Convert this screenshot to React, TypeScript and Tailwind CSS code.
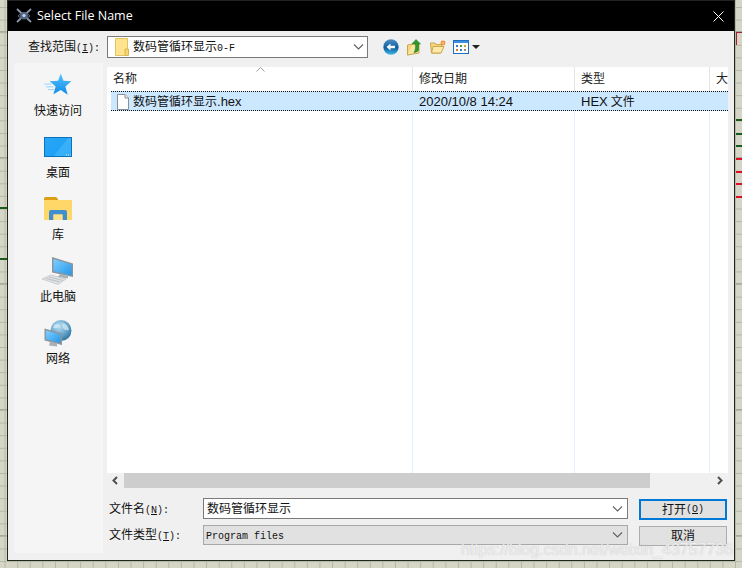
import React from "react";

const cjk = "font-['Noto_Sans','Noto_Sans_CJK_SC',sans-serif]";

function M({ children }: { children: React.ReactNode }) {
  return <span className="font-['Liberation_Mono',monospace] text-[10px]">{children}</span>;
}

function AppLogo() {
  return (
    <svg width="16" height="16" viewBox="0 0 16 16">
      <path d="M1 1 L15 14 M15 1 L1 14" stroke="#8b98a8" strokeWidth="1.8" />
      <ellipse cx="8" cy="7.5" rx="4" ry="3.5" fill="#4f6286" />
      <circle cx="8" cy="7.5" r="1.6" fill="#cfd8e6" />
      <path d="M2 8 Q8 1 14 8 Q8 14 2 8" fill="none" stroke="#5f6e80" />
    </svg>
  );
}

function FolderSmall() {
  return (
    <svg width="14" height="18" viewBox="0 0 14 18">
      <path d="M0.5 0.5 H12.5 V17.5 H0.5 Z" fill="#ffe38e" stroke="#e6c25f" />
      <path d="M10 11 H13.5 V17.5 H10 Z" fill="#f7d56e" stroke="#dcb550" />
    </svg>
  );
}

function FileIcon() {
  return (
    <svg width="14" height="16" viewBox="0 0 14 16">
      <path d="M1.5 0.5 H9 L12.5 4 V15.5 H1.5 Z" fill="#fff" stroke="#8a8f96" />
      <path d="M9 0.5 V4 H12.5" fill="#eee" stroke="#8a8f96" />
    </svg>
  );
}

function BackIcon() {
  return (
    <svg width="16" height="16" viewBox="0 0 16 16">
      <defs>
        <linearGradient id="bk" x1="0" y1="0" x2="0" y2="1">
          <stop offset="0" stopColor="#4d8fc4" />
          <stop offset="0.55" stopColor="#0f5f9e" />
          <stop offset="1" stopColor="#3fb7e8" />
        </linearGradient>
      </defs>
      <circle cx="8" cy="8" r="7.7" fill="url(#bk)" />
      <path d="M3.5 8 L7.5 4.5 V6.7 H12 V9.3 H7.5 V11.5 Z" fill="#f4f8fc" />
    </svg>
  );
}

function UpIcon() {
  return (
    <svg width="15" height="17" viewBox="0 0 15 17">
      <path d="M0.5 6 L6 5 V14 L0.5 16 Z" fill="#f6d77e" stroke="#c9a64c" />
      <path d="M6 5 H12 V14 L0.5 16" fill="#fbe6a2" stroke="#c9a64c" />
      <path d="M9 0.5 L13.5 5 H11.5 V11 Q11 13 7 13.5 Q9 11 8.5 5 H5 Z" fill="#2e9a2e" stroke="#1b6e1b" strokeWidth="0.5" />
    </svg>
  );
}

function NewFolderIcon() {
  return (
    <svg width="16" height="14" viewBox="0 0 16 14">
      <path d="M0.5 3 H5 L6 4.5 H12 V6 L10.5 13 H1.5 Z" fill="#f6d77e" stroke="#c9a64c" />
      <path d="M3 6.5 H14 L11 13 H1.5 Z" fill="#fdeaa8" stroke="#c9a64c" />
      <circle cx="13" cy="3" r="2.4" fill="#ee7a2a" />
      <path d="M13 0 V6 M10 3 H16" stroke="#ffd9a0" strokeWidth="0.7" />
    </svg>
  );
}

function ViewIcon() {
  return (
    <svg width="16" height="14" viewBox="0 0 16 14">
      <rect x="0.5" y="0.5" width="15" height="13" fill="#fff" stroke="#1f6fc4" />
      <rect x="1" y="1" width="14" height="2" fill="#3d8ede" />
      <rect x="3" y="5" width="2" height="2" fill="#3c78c8" />
      <rect x="7" y="5" width="2" height="2" fill="#49a04a" />
      <rect x="11" y="5" width="2" height="2" fill="#e0a030" />
      <rect x="3" y="9" width="2" height="2" fill="#d87830" />
      <rect x="7" y="9" width="2" height="2" fill="#3c78c8" />
      <rect x="11" y="9" width="2" height="2" fill="#8a8a8a" />
    </svg>
  );
}

function StarIcon() {
  return (
    <svg width="30" height="24" viewBox="0 0 30 26">
      <defs>
        <linearGradient id="st" x1="0" y1="0" x2="0" y2="1">
          <stop offset="0" stopColor="#5cc4ff" />
          <stop offset="1" stopColor="#0c8be8" />
        </linearGradient>
      </defs>
      <path d="M18 0.5 L21 8.5 L29.5 9 L23 14.5 L25.5 23.5 L18 18.5 L10 23 L12.5 14.5 L6 9 L15 8.5 Z" fill="url(#st)" />
      <path d="M0 12 H8 M2 15 H10 M4 18 H11" stroke="#8fd0f8" strokeWidth="1" />
    </svg>
  );
}

function DesktopIcon() {
  return (
    <svg width="28" height="20" viewBox="0 0 28 20">
      <defs>
        <linearGradient id="dk" x1="0" y1="0" x2="1" y2="1">
          <stop offset="0" stopColor="#2ba6f5" />
          <stop offset="1" stopColor="#16a0f8" />
        </linearGradient>
      </defs>
      <rect x="0.5" y="0.5" width="27" height="19" fill="url(#dk)" stroke="#0b73bd" />
      <path d="M10 19 L24 1 H27 V19 Z" fill="#4fbcfb" opacity="0.55" />
      <path d="M22 18 H26.5" stroke="#dff2ff" strokeDasharray="1 1" />
    </svg>
  );
}

function LibraryIcon() {
  return (
    <svg width="28" height="24" viewBox="0 0 28 24">
      <path d="M0 1.5 Q0 0 1.5 0 H12 L14 2 V6 H0 Z" fill="#dba012" />
      <path d="M0 3 H28 V23 H0 Z" fill="#ffd768" />
      <path d="M5 23 V15 Q5 13 7 13 H21 Q23 13 23 15 V23 H18.5 V17.5 H9.5 V23 Z" fill="#3f8ecf" />
      <rect x="9.5" y="17.5" width="9" height="5.5" fill="#ffe08a" />
    </svg>
  );
}

function PcIcon() {
  return (
    <svg width="32" height="28" viewBox="0 0 32 28">
      <defs>
        <linearGradient id="pc" x1="0" y1="0" x2="1" y2="1">
          <stop offset="0" stopColor="#7fd0ff" />
          <stop offset="1" stopColor="#2496ea" />
        </linearGradient>
      </defs>
      <path d="M10 0 L31 6.5 V20 L10 15.5 Z" fill="#8b959e" />
      <path d="M11.5 2 L29.5 7.5 V18.5 L11.5 14 Z" fill="url(#pc)" />
      <path d="M18 17 L26 19 V21.5 L16 20 Z" fill="#a8b0b6" />
      <path d="M0 22 L9 18 L24 22 L16 27.5 Z" fill="#dfe2e4" stroke="#b8bcc0" strokeWidth="0.6" />
      <path d="M4 21.5 L18 25 M7 20 L21 23.5" stroke="#a8acb0" strokeWidth="0.6" />
    </svg>
  );
}

function NetIcon() {
  return (
    <svg width="28" height="28" viewBox="0 0 28 28">
      <defs>
        <radialGradient id="gl" cx="0.4" cy="0.3" r="0.8">
          <stop offset="0" stopColor="#bfe0f2" />
          <stop offset="0.6" stopColor="#5b9dc4" />
          <stop offset="1" stopColor="#25658f" />
        </radialGradient>
        <linearGradient id="ns" x1="0" y1="0" x2="1" y2="1">
          <stop offset="0" stopColor="#7fd0ff" />
          <stop offset="1" stopColor="#2496ea" />
        </linearGradient>
      </defs>
      <circle cx="17" cy="10.5" r="10.5" fill="url(#gl)" />
      <path d="M10 5 Q14 3 16 6 Q13 9 9 8 Z M18 3 Q24 4 25 10 Q21 11 19 8 Z" fill="#d9ecf6" opacity="0.7" />
      <path d="M0.5 8.5 L18 13.5 V25 L0.5 20.5 Z" fill="#8b959e" />
      <path d="M2 10.5 L16.5 14.5 V23 L2 19.3 Z" fill="url(#ns)" />
      <path d="M6 21.5 L13 23.5 V26.5 L5 25.5 Z" fill="#a8b0b6" />
    </svg>
  );
}

function Chevron() {
  return (
    <svg width="11" height="6" viewBox="0 0 11 6" className="shrink-0">
      <path d="M1 0.5 L5.5 5 L10 0.5" fill="none" stroke="#606060" strokeWidth="1.1" />
    </svg>
  );
}

function Place({ icon, label, pb }: { icon: React.ReactNode; label: string; pb: string }) {
  return (
    <div className="flex h-[62px] flex-col items-center">
      <div className={`flex h-[38px] items-end justify-center ${pb}`}>{icon}</div>
      <span className="text-[12px] leading-[18px] text-[#111]">{label}</span>
    </div>
  );
}

const TICKS: { y: number; cls: string }[] = [
  { y: 119, cls: "bg-[#1a5a1a]" },
  { y: 133, cls: "bg-[#1a5a1a]" },
  { y: 145, cls: "bg-[#1a5a1a]" },
  { y: 158, cls: "bg-[#e01020]" },
  { y: 171, cls: "bg-[#e01020]" },
  { y: 183, cls: "bg-[#e01020]" },
  { y: 196, cls: "bg-[#e01020]" },
];

export default function App() {
  return (
    <div
      className={`relative h-[568px] w-[742px] overflow-hidden bg-[#d6d6c6] bg-[linear-gradient(#b6b6a6_1px,transparent_1px),linear-gradient(90deg,#b6b6a6_1px,transparent_1px),linear-gradient(#a9a999_2px,transparent_2px)] bg-[size:12.6px_12.6px,12.6px_12.6px,126px_126px] bg-[position:4.6px_7px,4.6px_7px,0_31px] pb-[7px] pl-[7px] pr-[7px] ${cjk}`}
    >
      <div className="absolute left-0 top-[207px] h-[2px] w-[7px] bg-[#1a5a1a]" />
      <div className="absolute left-0 top-[258px] h-[2px] w-[7px] bg-[#1a5a1a]" />
      <div className="absolute right-0 top-0 h-full w-[6px]">
        <div className="absolute left-0 top-[32px] h-[13px] w-full border-l border-t border-[#a02030]" />
        {TICKS.map((t) => (
          <div key={t.y} className={`absolute left-0 h-[2px] w-full ${t.cls}`} style={{ top: t.y }} />
        ))}
      </div>

      <div className="flex h-[561px] flex-col border border-t-0 border-[#1b2a1b] bg-[#f0f0f0]">
        {/* title bar */}
        <div className="flex h-[31px] shrink-0 items-center justify-between border-t border-[#222] bg-black pl-[8px] pr-[9px] text-white">
          <div className="flex items-center gap-[5px]">
            <AppLogo />
            <span className="font-['Open_Sans',sans-serif] text-[12.5px] leading-none">Select File Name</span>
          </div>
          <svg width="11" height="11" viewBox="0 0 11 11" className="mr-[1px]">
            <path d="M0.5 0.5 L10.5 10.5 M10.5 0.5 L0.5 10.5" stroke="#fff" strokeWidth="1" />
          </svg>
        </div>

        {/* look-in row */}
        <div className="flex h-[32px] shrink-0 items-center pl-[20px]">
          <span className="w-[79px] text-[12px] leading-none text-[#111]">
            查找范围<M>(<span className="underline">I</span>):</M>
          </span>
          <div className="mr-[15px] flex h-[22px] w-[261px] items-center justify-between border border-[#7a7a7a] bg-white pl-[7px] pr-[3px]">
            <span className="flex items-center gap-[4px] text-[12px] text-[#111]">
              <FolderSmall />
              <span>
                数码管循环显示<M>0-F</M>
              </span>
            </span>
            <Chevron />
          </div>
          <div className="flex items-center">
            <BackIcon />
            <span className="ml-[8px]"><UpIcon /></span>
            <span className="ml-[8px]"><NewFolderIcon /></span>
            <span className="ml-[7px]"><ViewIcon /></span>
            <span className="ml-[3px] h-0 w-0 border-x-[4px] border-t-[4px] border-x-transparent border-t-[#222]" />
          </div>
        </div>

        {/* main */}
        <div className="flex min-h-0 flex-1 pl-[6px] pr-[6px]">
          <div className="mb-[7px] mr-[4px] flex w-[89px] shrink-0 flex-col bg-[#f5f5f5] pr-[1px] pt-[1px]">
            <Place icon={<StarIcon />} label="快速访问" pb="pb-[5px]" />
            <Place icon={<DesktopIcon />} label="桌面" pb="pb-[7px]" />
            <Place icon={<LibraryIcon />} label="库" pb="pb-[5px]" />
            <Place icon={<PcIcon />} label="此电脑" pb="pb-[3px]" />
            <Place icon={<NetIcon />} label="网络" pb="pb-[2px]" />
          </div>

          <div className="flex min-w-0 flex-1 flex-col pt-[4px]">
            {/* list */}
            <div className="flex h-[406px] shrink-0 flex-col bg-white">
              <div className="relative flex h-[24px] shrink-0 items-center text-[12px] leading-none text-[#222]">
                <div className="h-full w-[306px] border-r border-[#e5e5e5] pl-[6px] pt-[6px]">名称</div>
                <div className="h-full w-[162px] border-r border-[#e5e5e5] pl-[6px] pt-[6px]">修改日期</div>
                <div className="h-full w-[135px] border-r border-[#e5e5e5] pl-[6px] pt-[6px]">类型</div>
                <div className="h-full flex-1 overflow-hidden pl-[6px] pt-[6px]">大</div>
                <svg width="9" height="5" viewBox="0 0 9 5" className="absolute left-[149px] top-0">
                  <path d="M0.5 4.5 L4.5 0.5 L8.5 4.5" fill="none" stroke="#9a9a9a" />
                </svg>
              </div>
              <div className="relative min-h-0 flex-1">
                <div className="absolute inset-0 flex">
                  <div className="w-[306px] border-r border-[#e3effc]" />
                  <div className="w-[162px] border-r border-[#e3effc]" />
                  <div className="w-[135px] border-r border-[#e3effc]" />
                </div>
                <div className="relative ml-[4px] flex h-[20px] items-center border-y border-dotted border-[#111] bg-[#cce8ff] pt-[1px] text-[12px] leading-none text-[#111]">
                  <div className="flex w-[302px] items-center gap-[3px] pl-[5px]">
                    <FileIcon />
                    <span>
                      数码管循环显示<span className="font-['Liberation_Sans',sans-serif] text-[13px]">.hex</span>
                    </span>
                  </div>
                  <div className="w-[162px] pl-[6px] font-['Liberation_Sans',sans-serif] text-[13px]">2020/10/8 14:24</div>
                  <div className="pl-[6px]"><span className="font-['Liberation_Sans',sans-serif] text-[13px]">HEX</span> 文件</div>
                </div>
              </div>
            </div>

            {/* scrollbar */}
            <div className="flex h-[15px] shrink-0 items-center bg-[#f0f0f0]">
              <svg width="17" height="15" viewBox="0 0 17 15" className="shrink-0">
                <path d="M10 4 L6.5 7.5 L10 11" fill="none" stroke="#505050" strokeWidth="2" />
              </svg>
              <div className="h-full w-[526px] bg-[#cdcdcd]" />
              <div className="flex-1" />
              <svg width="17" height="15" viewBox="0 0 17 15" className="shrink-0">
                <path d="M7 4 L10.5 7.5 L7 11" fill="none" stroke="#505050" strokeWidth="2" />
              </svg>
            </div>

            {/* form */}
            <div className="flex pt-[10px] text-[12px] leading-none text-[#111]">
              <div className="flex flex-col">
                <div className="flex h-[21px] items-center">
                  <span className="w-[96px] pl-[2px] pt-[1px]">文件名<M>(<span className="underline">N</span>):</M></span>
                  <div className="flex h-[21px] w-[425px] items-center justify-between border border-[#7a7a7a] bg-white pl-[3px] pr-[4px]">
                    <span>数码管循环显示</span>
                    <Chevron />
                  </div>
                </div>
                <div className="mt-[6px] flex h-[20px] items-center">
                  <span className="w-[96px] pl-[2px] pt-[1px]">文件类型<M>(<span className="underline">T</span>):</M></span>
                  <div className="flex h-[20px] w-[425px] items-center justify-between border border-[#a8a8a8] bg-[#e1e1e1] pl-[2px] pr-[4px]">
                    <span className="pt-[1px]"><M>Program files</M></span>
                    <Chevron />
                  </div>
                </div>
              </div>
              <div className="ml-[11px] flex w-[88px] flex-col pt-[1px]">
                <div className="flex h-[21px] items-center justify-center border-2 border-[#0078d7] bg-[#e1e1e1]">打开<M>(<span className="underline">O</span>)</M></div>
                <div className="mt-[6px] flex h-[20px] items-center justify-center border border-[#adadad] bg-[#e1e1e1]">取消</div>
              </div>
            </div>
          </div>
        </div>
      </div>

      <div className="pointer-events-none absolute left-[461px] top-[538px] whitespace-nowrap font-['Liberation_Sans',sans-serif] text-[16px] leading-[24px] text-white/75 [text-shadow:0_0_1px_#b0b0b0]">
        https://blog.csdn.net/weixin_43757736
      </div>
    </div>
  );
}
